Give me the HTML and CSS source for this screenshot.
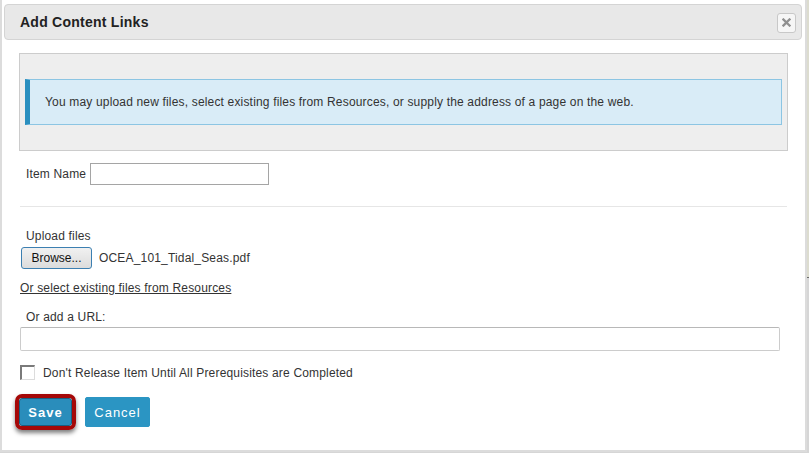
FILE: index.html
```html
<!DOCTYPE html>
<html>
<head>
<meta charset="utf-8">
<title>Add Content Links</title>
<link rel="stylesheet" href="styles.css">
</head>
<body>
<div class="dialog">
  <div class="header">
    <span class="title">Add Content Links</span>
    <button class="close" aria-label="Close">
      <svg width="9" height="9" viewBox="0 0 9 9"><path d="M1.5 1.5 L7.5 7.5 M7.5 1.5 L1.5 7.5" stroke="#909090" stroke-width="2.3" stroke-linecap="square"/></svg>
    </button>
  </div>
  <div class="content">
    <div class="graybox">
      <div class="info">You may upload new files, select existing files from Resources, or supply the address of a page on the web.</div>
    </div>
    <div class="row item-row">
      <label class="lbl">Item Name</label>
      <input class="item-input" type="text">
    </div>
    <div class="sep"></div>
    <div class="lbl upload-lbl">Upload files</div>
    <div class="row file-row">
      <button class="browse">Browse...</button>
      <span class="filename">OCEA_101_Tidal_Seas.pdf</span>
    </div>
    <a class="link" href="#">Or select existing files from Resources</a>
    <div class="lbl url-lbl">Or add a URL:</div>
    <input class="url-input" type="text">
    <div class="row check-row">
      <span class="checkbox"></span>
      <span class="check-lbl">Don't Release Item Until All Prerequisites are Completed</span>
    </div>
    <div class="row btn-row">
      <div class="highlight"><button class="btn save">Save</button></div>
      <button class="btn cancel">Cancel</button>
    </div>
  </div>
</div>
</body>
</html>
```
FILE: styles.css
```css
html, body {
  margin: 0;
  padding: 0;
}
body {
  width: 809px;
  height: 453px;
  overflow: hidden;
  background: linear-gradient(to bottom, #dcdccf 0, #dcdccf 277px, #6c6c6c 277px, #6c6c6c 278px, #d6d6d6 278px);
  font-family: "Liberation Sans", Arial, sans-serif;
  font-size: 12px;
  letter-spacing: 0.17px;
  color: #333;
}
.dialog {
  width: 807px;
  height: 452px;
  box-sizing: border-box;
  background: #fff;
  border: 2px solid #dcdcdc;
  border-top: none;
  padding-top: 4px;
}
.header {
  margin: 0 3px 0 2px;
  height: 36px;
  box-sizing: border-box;
  background: #e8e8e8;
  border: 1px solid #d4d4d4;
  border-radius: 4px;
  display: flex;
  align-items: center;
  justify-content: space-between;
  padding: 0 5px 0 15px;
}
.title {
  font-weight: bold;
  font-size: 14px;
  letter-spacing: 0.25px;
  color: #222;
}
.close {
  width: 19px;
  height: 20px;
  padding: 0;
  margin-top: 1px;
  background: #f6f6f6;
  border: 1px solid #c8c8c8;
  border-radius: 3px;
  display: flex;
  align-items: center;
  justify-content: center;
}
.content {
  padding-left: 18px;
}
.graybox {
  margin: 13px 0 0 -1px;
  width: 769px;
  height: 98px;
  box-sizing: border-box;
  background: #eeeeee;
  border: 1px solid #cccccc;
  padding: 25px 5px 0 5px;
}
.info {
  height: 46px;
  box-sizing: border-box;
  background: #d9ecf7;
  border: 1px solid #8cc5e3;
  border-left: 5px solid #2a8fbf;
  padding: 0 0 0 15px;
  display: flex;
  align-items: center;
  color: #333;
}
.row {
  display: flex;
  align-items: center;
}
.item-row {
  margin-top: 12px;
  padding-left: 6px;
}
.item-input {
  margin: 0 0 0 4px;
  width: 179px;
  height: 22px;
  box-sizing: border-box;
  border: 1px solid #a5a5a5;
  padding: 0 3px;
  font: inherit;
}
.sep {
  margin-top: 21px;
  width: 767px;
  height: 1px;
  background: #e6e6e6;
}
.lbl {
  line-height: 14px;
}
.upload-lbl {
  margin-top: 22px;
  padding-left: 6px;
}
.file-row {
  margin-top: 4px;
}
.browse {
  margin-left: 1px;
  width: 71px;
  height: 22px;
  padding: 0;
  border: 1px solid #3c7fb1;
  border-radius: 3px;
  background: linear-gradient(to bottom, #f1f1f1, #dcdcdc);
  font: inherit;
  color: #111;
}
.filename {
  margin-left: 7px;
}
.link {
  display: block;
  margin-top: 12px;
  width: max-content;
  color: #333;
  line-height: 14px;
  text-decoration: underline;
}
.url-lbl {
  margin-top: 15px;
  padding-left: 6px;
}
.url-input {
  display: block;
  margin: 3px 0 0 0;
  width: 760px;
  height: 24px;
  box-sizing: border-box;
  border: 1px solid #cccccc;
  border-top-color: #b8b8b8;
  border-radius: 2px;
  font: inherit;
}
.check-row {
  margin-top: 14px;
}
.checkbox {
  width: 15px;
  height: 15px;
  box-sizing: border-box;
  border: 1px solid #dcdcdc;
  border-top: 2px solid #7a7a7a;
  border-left: 2px solid #7a7a7a;
  background: #fff;
}
.check-lbl {
  margin-left: 8px;
}
.btn-row {
  margin-top: 14px;
}
.highlight {
  margin-left: -5px;
  border: 4px solid #a50808;
  border-radius: 7px;
  padding: 0;
  box-shadow: 0 3px 4px rgba(0,0,0,0.5);
}
.btn {
  font-family: "Liberation Sans", Arial, sans-serif;
  color: #fff;
  letter-spacing: 1px;
  padding: 0;
}
.save {
  display: block;
  width: 53px;
  height: 28px;
  background: #2a8dbb;
  border: 1px solid #1a5f82;
  border-radius: 3px;
  font-weight: bold;
  font-size: 13px;
}
.cancel {
  margin-left: 9px;
  width: 65px;
  height: 30px;
  background: #2b95c3;
  border: 1px solid #2b95c3;
  border-radius: 2px;
  font-size: 13px;
}
```
